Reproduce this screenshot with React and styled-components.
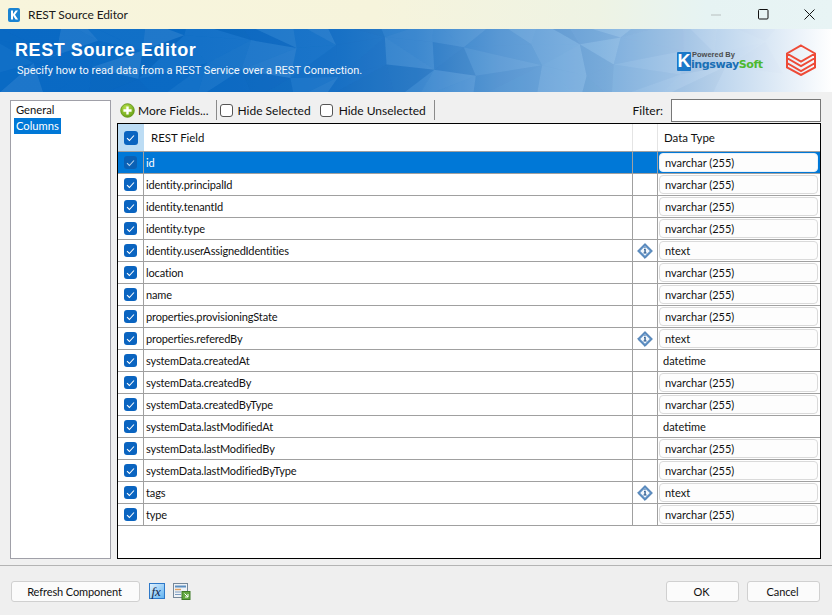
import React from 'react';
import styled, { createGlobalStyle } from 'styled-components';

const Global = createGlobalStyle`
  html, body { margin: 0; padding: 0; }
  body { width: 832px; height: 615px; overflow: hidden; background: #f0f0f0; font-family: Lato, "Liberation Sans", sans-serif; font-size: 12px; color: #111; }
  * { box-sizing: border-box; }
`;

const Win = styled.div`
  width: 832px; height: 615px; display: flex; flex-direction: column; background: #f0f0f0;
`;
const TitleBar = styled.header`
  height: 29px; flex: none; display: flex; align-items: center; padding-left: 8px;
  background: linear-gradient(90deg, #f8f5dc 0%, #f6f4dc 45%, #eef3e4 72%, #e6f3f3 85%, #e8f4f5 100%);
`;
const TitleText = styled.span`
  margin-left: 8px; font-size: 12px; letter-spacing: -0.1px; color: #1a1a1a; flex: 1;
`;
const WinBtn = styled.span`
  width: 46px; height: 29px; display: flex; align-items: center; justify-content: center; flex: none;
`;
const Banner = styled.section`
  position: relative; height: 63px; flex: none; overflow: hidden; display: flex; align-items: flex-start;
  background: linear-gradient(90deg, #0a6bc6 0%, #0b6cc6 24%, #1873c8 40%, #2f80cc 50%, #5c9bd6 60%, #7fb2e0 72%, #a8c8e8 82%, #d3e3f3 91%, #ffffff 100%);
`;
const Facets = styled.svg`
  position: absolute; inset: 0; width: 832px; height: 63px;
`;
const BannerText = styled.div`
  position: relative; padding: 11px 0 0 15px; color: #fff; flex: 1;
`;
const BannerTitle = styled.div`
  font-family: "Liberation Sans", sans-serif; font-weight: 700; font-size: 18px; line-height: 20px; letter-spacing: 0.57px;
`;
const BannerSub = styled.div`
  margin: 4px 0 0 2px; font-family: Roboto, sans-serif; font-size: 11px; line-height: 14px; color: #f2f7fc;
`;
const Logo = styled.div`
  position: relative; width: 88px; height: 28px; margin: 21px 21px 0 0; flex: none;
`;
const LogoK = styled.span`
  position: absolute; left: 0; top: 2px; width: 14px; height: 19px; background: #1b78c8; color: #fff; border-radius: 1px;
  font: 700 18px/19px "Liberation Sans", sans-serif; text-align: center;
`;
const LogoPowered = styled.span`
  position: absolute; left: 15px; top: 2px; font: 700 7.5px/6px "Liberation Sans", sans-serif; color: #4c4c4c; white-space: nowrap;
`;
const LogoWord = styled.span`
  position: absolute; left: 14px; top: 9px; font: 700 11.1px/12px "DejaVu Sans", sans-serif; color: #1a6fb5; letter-spacing: -0.45px; white-space: nowrap;
`;
const LogoGreen = styled.span`
  color: #4cb92f;
`;
const StackIcon = styled.svg`
  position: relative; width: 30px; height: 32px; margin: 15px 16px 0 0; flex: none;
`;
const Body = styled.main`
  flex: 1; display: flex; gap: 6px; padding: 7px 11px 6px 10px; min-height: 0;
`;
const SideList = styled.nav`
  width: 101px; flex: none; margin-top: 1px; border: 1px solid #a0a0a8; background: #fff; padding: 1px 3px; display: flex; flex-direction: column; font-size: 11.2px;
`;
const SideItem = styled.div`
  height: 16px; line-height: 16px; padding-left: 2px; width: ${p => (p.$active ? '47px' : 'auto')};
  background: ${p => (p.$active ? '#0078d7' : 'transparent')}; color: ${p => (p.$active ? '#fff' : '#111')};
`;
const Main = styled.div`
  flex: 1; display: flex; flex-direction: column; min-width: 0;
`;
const Toolbar = styled.div`
  height: 24px; flex: none; display: flex; align-items: center; padding: 0 0 2px 3px;
`;
const ToolLabel = styled.span`
  margin-left: 3px; white-space: nowrap;
`;
const Sep = styled.span`
  width: 1px; height: 20px; background: #8a8a8a; margin: 0 3px 0 ${p => p.$left || 0}px;
`;
const BoxCheck = styled.span`
  width: 13px; height: 13px; border: 1px solid #555; border-radius: 3px; background: #fff; flex: none; margin-left: ${p => p.$left || 0}px; margin-right: ${p => p.$gap}px;
`;
const CheckLabel = styled.span`
  white-space: nowrap;
`;
const FilterLabel = styled.span`
  margin-left: auto; margin-right: 8px;
`;
const FilterInput = styled.div`
  width: 150px; height: 23px; align-self: flex-start; border: 1px solid #777; background: #fff;
`;
const Grid = styled.div`
  flex: 1; border: 1px solid #000; background: #fff; display: flex; flex-direction: column; min-height: 0; font-size: 11px;
`;
const Row = styled.div`
  display: grid; grid-template-columns: 26px 489px 25px 162px; height: ${p => (p.$head ? '28px' : '22px')}; flex: none;
  border-bottom: 1px solid #a0a0a0;
  background: ${p => (p.$sel ? '#0078d7' : '#fff')}; color: ${p => (p.$sel ? '#fff' : '#111')};
`;
const CheckCell = styled.div`
  display: flex; align-items: center; justify-content: center; padding-right: ${p => (p.$head ? 0 : 1)}px;
  border-right: 1px solid ${p => (p.$head ? '#bcdcf4' : '#a0a0a0')};
  background: ${p => (p.$head ? '#bcdcf4' : 'transparent')};
`;
const FieldCell = styled.div`
  display: flex; align-items: center; padding-left: ${p => (p.$head ? '7px' : '2px')}; white-space: nowrap;
  border-right: 1px solid ${p => (p.$head ? '#e4e4e4' : '#a0a0a0')};
  font-size: ${p => (p.$head ? '11.4px' : 'inherit')};
  letter-spacing: ${p => (p.$head ? '0' : '-0.14px')};
`;
const IconCell = styled.div`
  display: flex; align-items: center; justify-content: center;
  border-right: 1px solid ${p => (p.$head ? '#e4e4e4' : '#a0a0a0')};
`;
const TypeCell = styled.div`
  display: flex; align-items: center; padding: ${p => (p.$pill ? '1px 2px 1px 1px' : '0 0 0 5px')}; background: ${p => (p.$sel ? '#0078d7' : 'transparent')};
`;
const TypeHead = styled.div`
  display: flex; align-items: center; padding-left: 6px; font-size: 11.5px;
`;
const Pill = styled.div`
  width: 100%; height: 19px; display: flex; align-items: center; padding-left: 5px; background: #fdfdfd; color: #111;
  border: 1px solid ${p => (p.$sel ? '#e8f2fb' : '#dadada')}; border-radius: 4px;
`;
const Check = styled.span`
  width: ${p => (p.$head ? 14 : 13)}px; height: ${p => (p.$head ? 14 : 13)}px; border-radius: 3px; display: flex; align-items: center; justify-content: center;
  background: ${p => (p.$dim ? '#0a60b4' : '#0a64c0')};
`;
const Footer = styled.footer`
  height: 50px; flex: none; border-top: 1px solid #b4b4b4; display: flex; align-items: center; padding: 0 12px 0 11px; background: #efefef; font-size: 11px;
`;
const Btn = styled.button`
  width: ${p => p.$w}px; height: 21px; padding: 0 2px 0 0; margin-right: ${p => p.$mr || 0}px; margin-top: 2px; border: 1px solid #d0d0d0; border-radius: 3px; background: #fbfbfb;
  font: inherit; letter-spacing: -0.1px; color: #111;
`;
const IconBtn = styled.svg`
  width: 18px; height: 18px; margin-left: ${p => p.$left}px; margin-top: 2px; flex: none;
`;
const Spacer = styled.div`
  flex: 1;
`;

const rows = [
  ['id', 'nvarchar (255)', 0, 1],
  ['identity.principalId', 'nvarchar (255)', 0, 1],
  ['identity.tenantId', 'nvarchar (255)', 0, 1],
  ['identity.type', 'nvarchar (255)', 0, 1],
  ['identity.userAssignedIdentities', 'ntext', 1, 1],
  ['location', 'nvarchar (255)', 0, 1],
  ['name', 'nvarchar (255)', 0, 1],
  ['properties.provisioningState', 'nvarchar (255)', 0, 1],
  ['properties.referedBy', 'ntext', 1, 1],
  ['systemData.createdAt', 'datetime', 0, 0],
  ['systemData.createdBy', 'nvarchar (255)', 0, 1],
  ['systemData.createdByType', 'nvarchar (255)', 0, 1],
  ['systemData.lastModifiedAt', 'datetime', 0, 0],
  ['systemData.lastModifiedBy', 'nvarchar (255)', 0, 1],
  ['systemData.lastModifiedByType', 'nvarchar (255)', 0, 1],
  ['tags', 'ntext', 1, 1],
  ['type', 'nvarchar (255)', 0, 1],
];

const hash = (a, b) => {
  const v = Math.sin(a * 12.9898 + b * 78.233) * 43758.5453;
  return v - Math.floor(v);
};
const facetData = (() => {
  const step = 48;
  const ys = [-8, 16, 40, 70];
  const pt = (c, r) => [
    c * step + (hash(c, r) - 0.5) * 34,
    ys[r] + (r === 0 || r === 3 ? 0 : (hash(r, c + 7) - 0.5) * 20),
  ];
  const out = [];
  for (let c = -1; c < 17; c++) {
    for (let r = 0; r < 3; r++) {
      const a = pt(c, r), b = pt(c + 1, r), d = pt(c, r + 1), e = pt(c + 1, r + 1);
      const flip = hash(c + 3, r + 11) > 0.5;
      const tris = flip ? [[a, b, e], [a, e, d]] : [[a, b, d], [b, e, d]];
      tris.forEach((t, i) => {
        const n = hash(c * 3 + i + 1, r * 5 + 2);
        const fade = Math.max(0, 1 - Math.max(0, c * step - 560) / 200);
        out.push({
          d: `M${t.map(p => p.map(v => v.toFixed(1)).join(' ')).join('L')}Z`,
          dark: n < 0.5,
          o: (0.02 + hash(r + i, c + 5) * 0.07) * fade,
        });
      });
    }
  }
  return out;
})();

const Tick = ({ dim }) => (
  <svg width="9" height="8" viewBox="0 0 9 8"><path d="M1 4.2 3.4 6.5 8 1.5" fill="none" stroke={dim ? '#b8d4ee' : '#fff'} strokeWidth="1.1" /></svg>
);
const Info = () => (
  <svg width="16" height="16" viewBox="0 0 16 16">
    <path d="M8 .6 15.4 8 8 15.4.6 8Z" fill="#5d8fc4" stroke="#3e72a8" strokeWidth=".8" />
    <path d="M8 3.2 12.8 8 8 12.8 3.2 8Z" fill="#f2f7fc" />
    <path d="M7 5.9h1.7v3.7h.9v1H6.5v-1h.9V6.8H7Z M7.3 4.3h1.3v1H7.3Z" fill="#26568c" />
  </svg>
);

export default function App() {
  return (
    <Win>
      <Global />
      <TitleBar>
        <svg width="12" height="14" viewBox="0 0 12 14">
          <rect width="12" height="14" rx="2" fill="#1b84d2" />
          <path d="M3 2.5h2v3.6L7.6 2.5H10L7 6.8l3.1 4.7H7.6L5 7.6v3.9H3Z" fill="#fff" />
        </svg>
        <TitleText>REST Source Editor</TitleText>
        <WinBtn>
          <svg width="12" height="2"><rect y=".5" width="10" height="1" fill="#b8c0c0" /></svg>
        </WinBtn>
        <WinBtn>
          <svg width="11" height="11"><rect x=".5" y=".5" width="9.5" height="9.5" rx="1" fill="none" stroke="#111" /></svg>
        </WinBtn>
        <WinBtn>
          <svg width="11" height="11"><path d="M.5.5 10.5 10.5M10.5.5.5 10.5" stroke="#111" fill="none" /></svg>
        </WinBtn>
      </TitleBar>
      <Banner>
        <Facets viewBox="0 0 832 63">
          {facetData.map((f, i) => (
            <path key={i} d={f.d} fill={f.dark ? '#003a80' : '#ffffff'} opacity={f.o} />
          ))}
        </Facets>
        <BannerText>
          <BannerTitle>REST Source Editor</BannerTitle>
          <BannerSub>Specify how to read data from a REST Service over a REST Connection.</BannerSub>
        </BannerText>
        <Logo>
          <LogoK>K</LogoK>
          <LogoPowered>Powered By</LogoPowered>
          <LogoWord>ingsway<LogoGreen>Soft</LogoGreen></LogoWord>
        </Logo>
        <StackIcon viewBox="0 0 30 32">
          <path d="M15 1.5 29 9.5 15 17.5 1 9.5Z M1 9.5V14L15 22 29 14V9.5 M1 14V19L15 27 29 19V14 M1 19V23.5L15 31 29 23.5V19" fill="none" stroke="#ee4a37" strokeWidth="2" />
        </StackIcon>
      </Banner>
      <Body>
        <SideList>
          <SideItem>General</SideItem>
          <SideItem $active>Columns</SideItem>
        </SideList>
        <Main>
          <Toolbar>
            <svg width="15" height="15" viewBox="0 0 15 15">
              <defs>
                <radialGradient id="plusGrad" cx=".4" cy=".3" r=".8">
                  <stop offset="0" stopColor="#b8e04a" />
                  <stop offset="1" stopColor="#5f9a10" />
                </radialGradient>
              </defs>
              <circle cx="7.5" cy="7.5" r="6.8" fill="url(#plusGrad)" stroke="#5d8f12" strokeWidth=".8" />
              <path d="M7.5 3.4v8.2M3.4 7.5h8.2" stroke="#fff" strokeWidth="2.4" />
            </svg>
            <ToolLabel>More Fields...</ToolLabel>
            <Sep $left={7} />
            <BoxCheck $gap={5} />
            <CheckLabel>Hide Selected</CheckLabel>
            <BoxCheck $left={9} $gap={6} />
            <CheckLabel>Hide Unselected</CheckLabel>
            <Sep $left={8} />
            <FilterLabel>Filter:</FilterLabel>
            <FilterInput />
          </Toolbar>
          <Grid>
            <Row $head>
              <CheckCell $head><Check $head><Tick /></Check></CheckCell>
              <FieldCell $head>REST Field</FieldCell>
              <IconCell $head />
              <TypeHead>Data Type</TypeHead>
            </Row>
            {rows.map(([name, type, info, pill], i) => (
              <Row key={name} $sel={i === 0}>
                <CheckCell><Check $dim={i === 0}><Tick dim={i === 0} /></Check></CheckCell>
                <FieldCell>{name}</FieldCell>
                <IconCell>{info ? <Info /> : null}</IconCell>
                <TypeCell $pill={pill} $sel={i === 0}>{pill ? <Pill $sel={i === 0}>{type}</Pill> : type}</TypeCell>
              </Row>
            ))}
          </Grid>
        </Main>
      </Body>
      <Footer>
        <Btn $w={129}>Refresh Component</Btn>
        <IconBtn $left={9} viewBox="0 0 18 18">
          <defs>
            <linearGradient id="fxGrad" x1="0" y1="0" x2="1" y2="1">
              <stop offset="0" stopColor="#e6f4fe" />
              <stop offset="1" stopColor="#5cb0f0" />
            </linearGradient>
          </defs>
          <rect x=".5" y=".5" width="15" height="15" fill="url(#fxGrad)" stroke="#2d78c8" />
          <text x="2.5" y="12.5" fontFamily="Liberation Serif" fontStyle="italic" fontSize="13" fill="#12264a">fx</text>
        </IconBtn>
        <IconBtn $left={6} viewBox="0 0 18 18">
          <rect x=".5" y=".5" width="14" height="14" fill="#eef2f6" stroke="#76889a" />
          <path d="M2 3.5h11" stroke="#5c8fc0" strokeWidth="2" />
          <path d="M2 6.5h6" stroke="#e0a060" strokeWidth="1.4" />
          <path d="M2 9h6M2 11.5h6" stroke="#7c9cc0" strokeWidth="1.2" />
          <rect x="9" y="8.5" width="8" height="8" fill="#62a83f" stroke="#3f7a28" />
          <path d="M11.5 10.5 15 14M15 11v3h-3" stroke="#fff" fill="none" />
        </IconBtn>
        <Spacer />
        <Btn $w={73} $mr={8}>OK</Btn>
        <Btn $w={73}>Cancel</Btn>
      </Footer>
    </Win>
  );
}
